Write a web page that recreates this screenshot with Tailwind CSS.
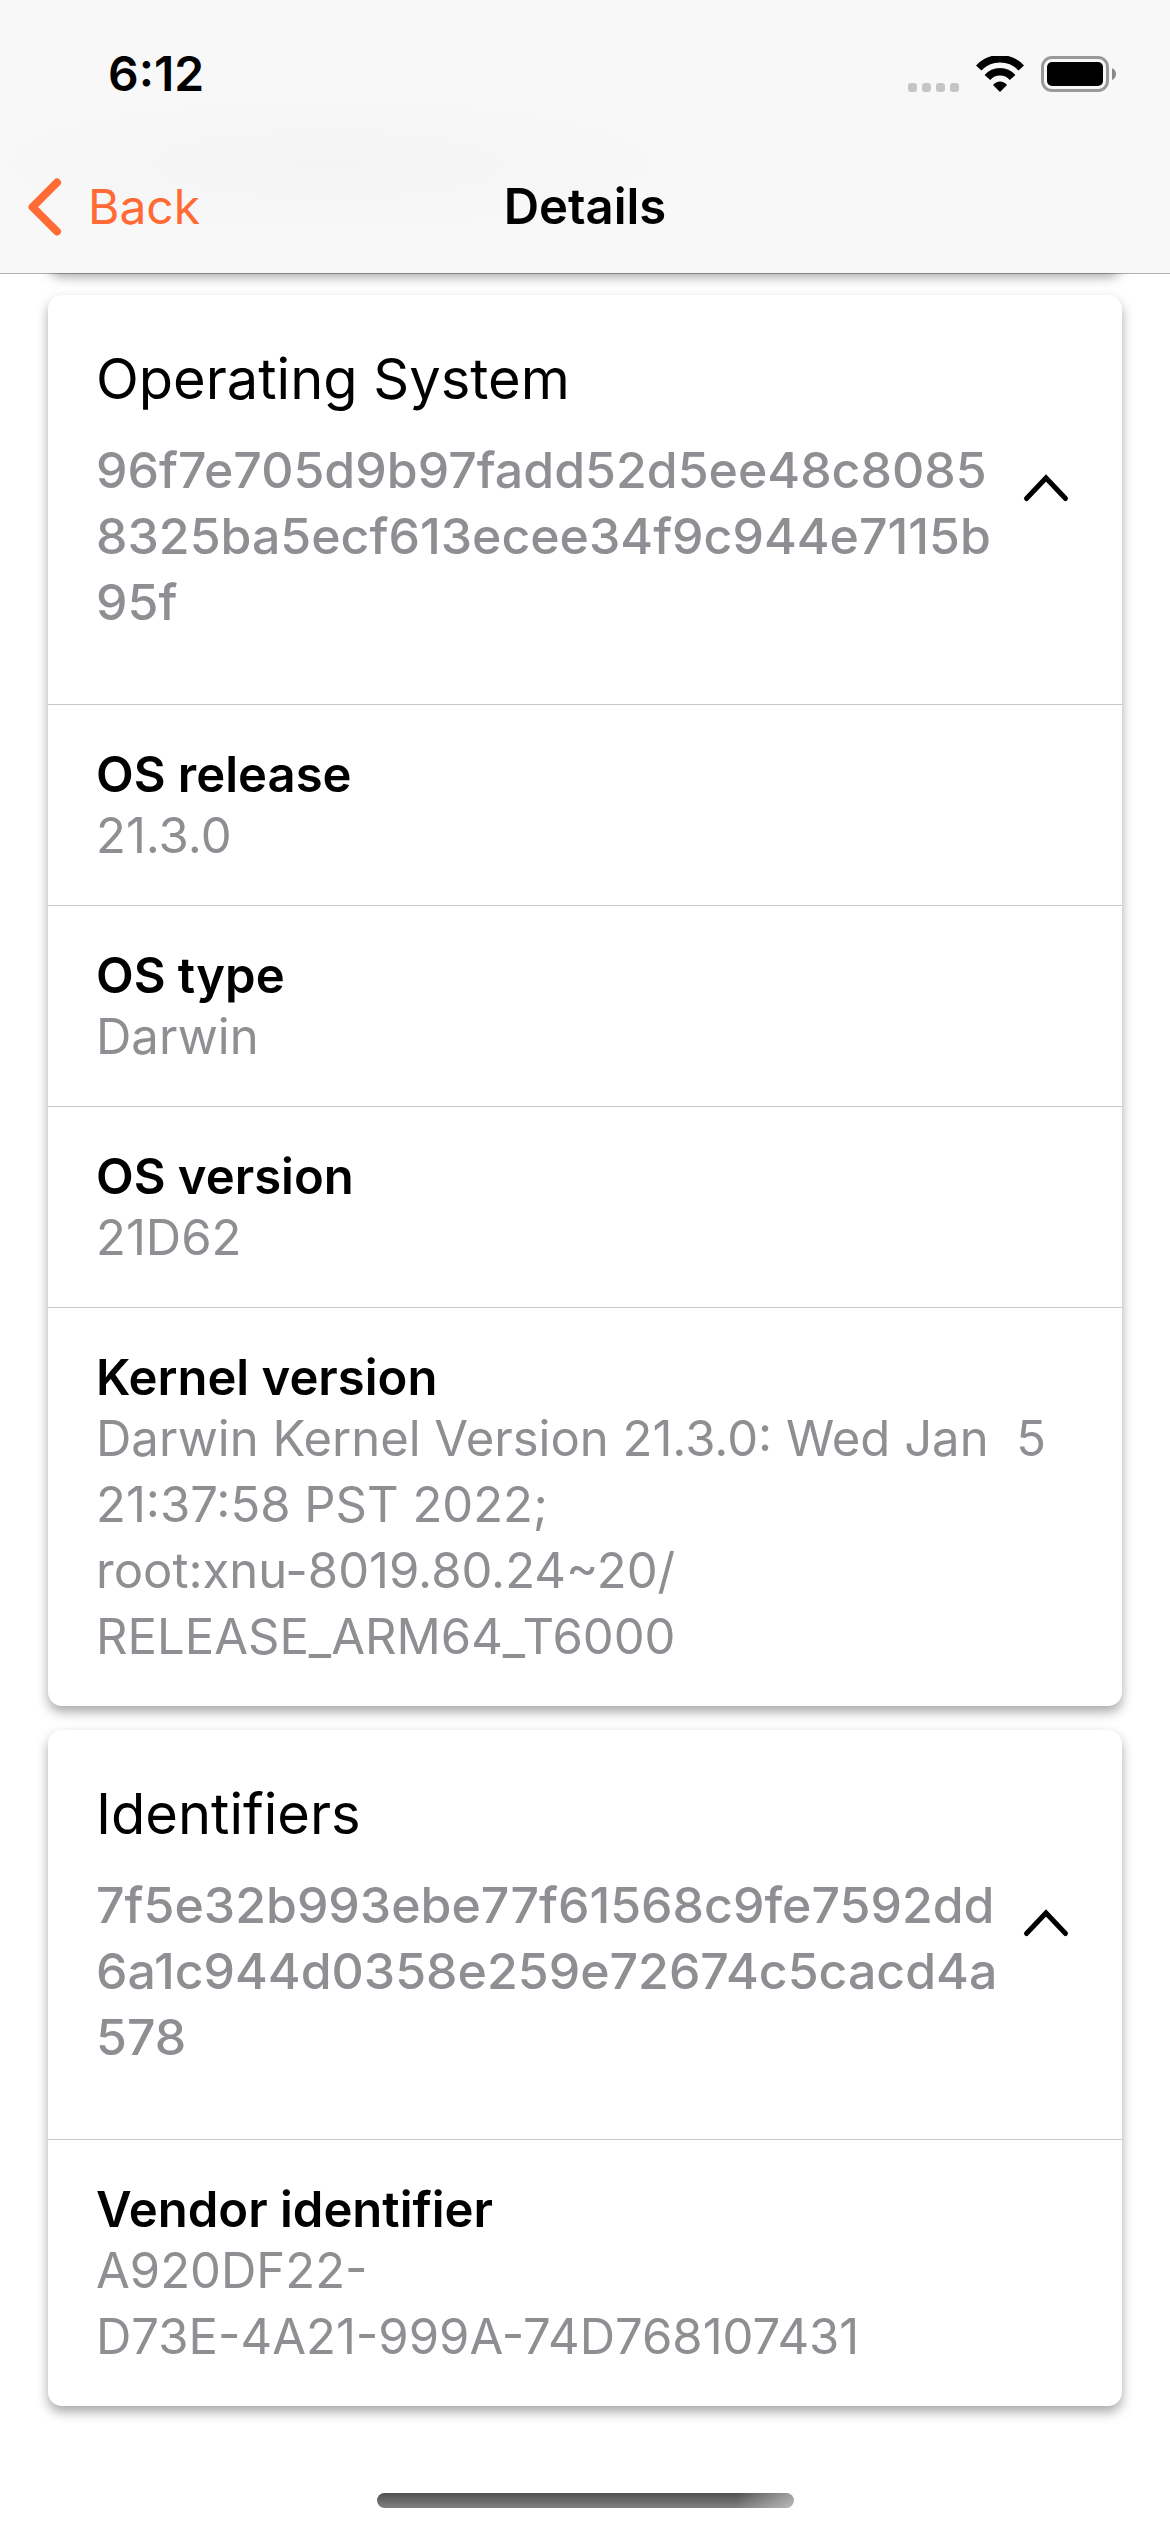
<!DOCTYPE html>
<html lang="en">
<head>
<meta charset="utf-8">
<meta name="viewport" content="width=device-width, initial-scale=1">
<title>Details</title>
<script src="https://cdn.jsdelivr.net/npm/@tailwindcss/browser@4"></script>
</head>
<body class="flex min-h-screen flex-col bg-white font-['Inter',sans-serif] text-black">

<header class="relative z-10 border-b border-black/30 bg-[#f8f8f8] bg-[radial-gradient(ellipse_at_28%_60%,#f4f4f4_0%,#f8f8f8_32%)] bg-clip-padding">
  <!-- Status bar -->
  <div class="flex h-[141px] items-start justify-between pt-11 pr-[54px] pl-27">
    <time class="text-[48px] leading-[60px] font-semibold">6:12</time>
    <div class="flex h-[60px] items-center gap-[17px]">
      <svg class="h-[37px] w-[51px]" viewBox="0 0 51 37" fill="#c5c5c5" aria-hidden="true">
        <rect x="0" y="27" width="9" height="9" rx="3"/>
        <rect x="14" y="27" width="9" height="9" rx="3"/>
        <rect x="28" y="27" width="9" height="9" rx="3"/>
        <rect x="42" y="27" width="9" height="9" rx="3"/>
      </svg>
      <svg class="h-[37px] w-12" viewBox="0 0 48 37" fill="none" stroke="#000" stroke-width="7.5" aria-hidden="true">
        <path d="M2.7 12A29.2 29.2 0 0 1 45.3 12"/>
        <path d="M11.4 21.5A16.7 16.7 0 0 1 36.6 21.5"/>
        <path d="M24 36 17 29Q20 25.5 24 25.5Q28 25.5 31 29Z" fill="#000" stroke="none"/>
      </svg>
      <svg class="h-[37px] w-[75px]" viewBox="0 0 75 37" aria-hidden="true">
        <rect x="1.5" y="1.5" width="65" height="33" rx="9.5" fill="none" stroke="#999" stroke-width="3"/>
        <rect x="6" y="6" width="56" height="24" rx="5" fill="#000"/>
        <path d="M71 12Q75 14 75 18Q75 22 71 24Z" fill="#8a8a8a"/>
      </svg>
    </div>
  </div>
  <!-- Navigation bar -->
  <nav class="grid h-[132px] grid-cols-[1fr_auto_1fr] items-center">
    <a href="#" class="flex items-center gap-[26px] justify-self-start pl-7 text-[#ff6a35]">
      <svg class="h-[58px] w-[34px]" viewBox="0 0 34 58" fill="none" stroke="currentColor" stroke-width="8" stroke-linecap="round" stroke-linejoin="round" aria-hidden="true">
        <path d="M29 4.5 4.5 29 29 53.5"/>
      </svg>
      <span class="text-[48px] leading-[60px]">Back</span>
    </a>
    <h1 class="text-[49px] leading-[60px] font-semibold">Details</h1>
  </nav>
</header>

<main class="-mt-[43px] flex flex-col gap-6 px-12">
  <!-- Tail of the preceding card, scrolled under the header -->
  <div class="h-10 rounded-[14px] bg-white shadow-[0_6px_12px_rgba(0,0,0,0.34)]"></div>

  <section class="rounded-[14px] bg-white shadow-[0_6px_12px_rgba(0,0,0,0.34)]">
    <button type="button" aria-expanded="true" class="flex w-full items-center pt-12 pr-10 pb-[69px] pl-12 text-left">
      <span class="flex flex-1 flex-col gap-[22px]">
        <span class="text-[56px] leading-[72px]">Operating System</span>
        <span class="text-[50px] leading-[66px] font-medium break-all text-[#8e8e93]">96f7e705d9b97fadd52d5ee48c8085<wbr>8325ba5ecf613ecee34f9c944e7115b<wbr>95f</span>
      </span>
      <svg class="size-[72px] shrink-0" viewBox="0 0 72 72" fill="none" stroke="#000" stroke-width="5" stroke-linecap="round" aria-hidden="true">
        <path d="M16.5 45.5 36 25 55.5 45.5"/>
      </svg>
    </button>
    <dl>
      <div class="border-t border-[#c6c6c8] px-12 pt-[42px] pb-9">
        <dt class="text-[49px] leading-[56px] font-semibold">OS release</dt>
        <dd class="text-[49px] leading-[66px] text-[#8e8e93]">21.3.0</dd>
      </div>
      <div class="border-t border-[#c6c6c8] px-12 pt-[42px] pb-9">
        <dt class="text-[49px] leading-[56px] font-semibold">OS type</dt>
        <dd class="text-[49px] leading-[66px] text-[#8e8e93]">Darwin</dd>
      </div>
      <div class="border-t border-[#c6c6c8] px-12 pt-[42px] pb-9">
        <dt class="text-[49px] leading-[56px] font-semibold">OS version</dt>
        <dd class="text-[49px] leading-[66px] text-[#8e8e93]">21D62</dd>
      </div>
      <div class="border-t border-[#c6c6c8] px-12 pt-[42px] pb-9">
        <dt class="text-[49px] leading-[56px] font-semibold">Kernel version</dt>
        <dd class="text-[49px] leading-[66px] text-[#8e8e93]">Darwin Kernel Version 21.3.0: Wed Jan&nbsp; 5<br>21:37:58 PST 2022;<br>root:xnu-8019.80.24~20/<br>RELEASE_ARM64_T6000</dd>
      </div>
    </dl>
  </section>

  <section class="rounded-[14px] bg-white shadow-[0_6px_12px_rgba(0,0,0,0.34)]">
    <button type="button" aria-expanded="true" class="flex w-full items-center pt-12 pr-10 pb-[69px] pl-12 text-left">
      <span class="flex flex-1 flex-col gap-[22px]">
        <span class="text-[56px] leading-[72px]">Identifiers</span>
        <span class="text-[50px] leading-[66px] font-medium break-all text-[#8e8e93]">7f5e32b993ebe77f61568c9fe7592dd<wbr>6a1c944d0358e259e72674c5cacd4a<wbr>578</span>
      </span>
      <svg class="size-[72px] shrink-0" viewBox="0 0 72 72" fill="none" stroke="#000" stroke-width="5" stroke-linecap="round" aria-hidden="true">
        <path d="M16.5 45.5 36 25 55.5 45.5"/>
      </svg>
    </button>
    <dl>
      <div class="border-t border-[#c6c6c8] px-12 pt-[42px] pb-9">
        <dt class="text-[49px] leading-[56px] font-semibold">Vendor identifier</dt>
        <dd class="text-[49px] leading-[66px] text-[#8e8e93]">A920DF22-<br>D73E-4A21-999A-74D768107431</dd>
      </div>
    </dl>
  </section>
</main>

<!-- Home indicator -->
<div class="mx-auto mt-auto mb-6 h-[15px] w-[417px] rounded-full bg-[linear-gradient(to_right,transparent_86%,rgba(255,255,255,0.45)),linear-gradient(#505050,#808080)]"></div>

</body>
</html>
